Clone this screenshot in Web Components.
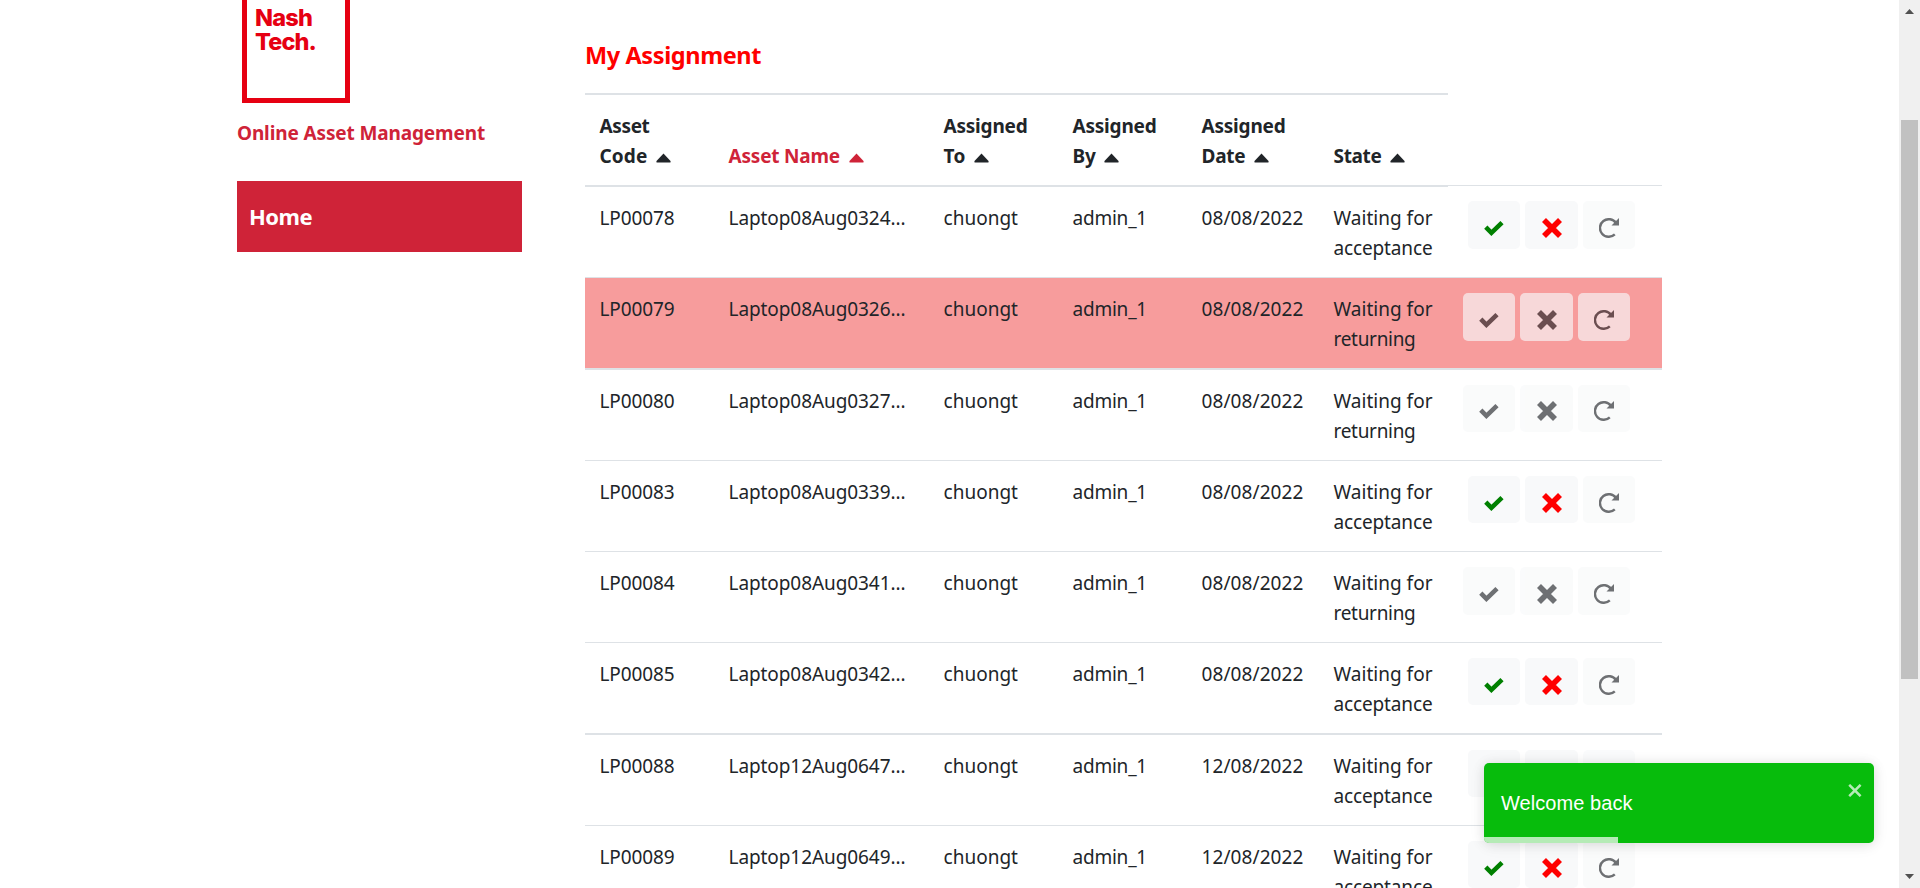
<!DOCTYPE html>
<html lang="en">
<head>
<meta charset="utf-8">
<title>Online Asset Management</title>
<style>
html,body{margin:0;height:888px;overflow:hidden;background:#fff}
body{font:19px/30px "Noto Sans","Open Sans",sans-serif;color:#212529}
</style>
</head>
<body>
<asset-app></asset-app>
<script>
const def=(name,html,after)=>customElements.define(name,class extends HTMLElement{
  connectedCallback(){
    if(this.shadowRoot)return;
    const t=document.createElement('template');
    t.innerHTML=typeof html==='function'?html(this):html;
    this.attachShadow({mode:'open'}).append(t.content.cloneNode(true));
    if(after)after(this);
  }
});

/* Text run that spaces its letters so it occupies the given width. */
def('fit-text','<style>:host{display:inline-block;white-space:nowrap}span{display:inline-block}</style><span><slot></slot></span>',el=>{
  const s=el.shadowRoot.querySelector('span'),w=+el.getAttribute('w');
  s.style.letterSpacing=(w-s.getBoundingClientRect().width)/el.textContent.length+'px';
});

def('brand-logo',`<style>
:host{display:block;box-sizing:border-box;width:108px;height:108px;margin-top:-5px;margin-left:5px;border:5px solid #e60012;padding:6px 0 0 8px;color:#e60012;font:800 23.5px/24px Inter,sans-serif}
div{height:24px}
</style><div><fit-text w="57">Nash</fit-text></div><div><fit-text w="61">Tech.</fit-text></div>`);

def('side-bar',`<style>
:host{display:block;width:285px;margin-left:237px}
h2{margin:15px 0 33px;font-size:19px;line-height:30px;color:#cf2338}
nav{box-sizing:border-box;height:71px;display:flex;align-items:center;padding:0 0 2px 12px;background:#cf2338;color:#fff;font-weight:700;font-size:22px}
</style><brand-logo></brand-logo><h2><fit-text w="248">Online Asset Management</fit-text></h2><nav><fit-text w="63">Home</fit-text></nav>`);

const icons={
 check:'<svg width="20" height="16" viewBox="0 0 20 16"><path d="M1.8 7.2 7.4 12.8 18 2.6" fill="none" stroke="currentColor" stroke-width="4.6"/></svg>',
 cross:'<svg width="20" height="20" viewBox="0 0 20 20"><path d="M2 2 18 18M18 2 2 18" fill="none" stroke="currentColor" stroke-width="5.6"/></svg>',
 redo:'<svg width="20" height="20" viewBox="0 0 20 20"><path d="M17 5A8.8 8.8 0 1 0 15.8 16.4" fill="none" stroke="currentColor" stroke-width="2.4"/><path d="M20 0V7.5H12.5Z" fill="currentColor"/></svg>'
};
def('icon-button',el=>`<style>
:host{box-sizing:border-box;display:flex;align-items:center;justify-content:center;width:52px;height:var(--h,48px);padding-top:var(--pad,6px);border-radius:5px;background:#f8f9fa;color:#212529}
:host([icon=cross]){width:53px}
:host([icon=check]){color:green}:host([icon=cross]){color:red}
:host([disabled]){opacity:.65;color:#212529}
svg{display:block}
</style>${icons[el.getAttribute('icon')]}`);

def('header-cell',el=>`<style>
:host{display:flex;flex-direction:column;justify-content:flex-end;padding:0 0 16px 14.5px;font-weight:700}
:host([active]){color:#cf2338}
svg{margin-left:8.5px}
</style><slot name="top"></slot><div><slot></slot><svg width="15" height="10" viewBox="0 0 15 10"><path d="M7.5.4 14.5 8Q15 9.5 14 9.5H1Q0 9.5.5 8Z" fill="currentColor"/></svg></div>`);

const cols='grid-template-columns:129px 215px 129px 129px 132px 129px 214px;';
def('asset-row',el=>{
  const [code,name,date,state]=['code','name','date','state'].map(k=>el.getAttribute(k));
  const ret=state==='returning',d=ret?'disabled':'';
  return `<style>
:host{box-sizing:border-box;display:grid;${cols}border-bottom:1px solid #dee2e6;height:91px}
:host([thick]){border-bottom-width:2px}
:host([active]){background:#f79c9c}
div{padding:16px 0 0 14.5px}
.acts{display:flex;gap:5px;padding:var(--top,15px) 0 0 ${ret?15:20}px}
</style><div><fit-text w="75">${code}</fit-text></div><div><fit-text w="177">${name}...</fit-text></div><div><fit-text w="74.5">chuongt</fit-text></div><div><fit-text w="74.5">admin_1</fit-text></div><div><fit-text w="102">${date}/08/2022</fit-text></div><div><fit-text w="99">Waiting for</fit-text><br><fit-text w="${ret?82:99}">${state}</fit-text></div>
<div class="acts"><icon-button icon="check" ${d}></icon-button><icon-button icon="cross" ${d}></icon-button><icon-button icon="redo" disabled></icon-button></div>`;
});

const short='--h:47px;--pad:7px';
const rows=[['LP00078','Laptop08Aug0324','08',0,91,'','--top:14px'],['LP00079','Laptop08Aug0326','08',1,92,'active thick',''],['LP00080','Laptop08Aug0327','08',1,91,'','--h:47px;--pad:5px'],['LP00083','Laptop08Aug0339','08',0,91,'',short],['LP00084','Laptop08Aug0341','08',1,91,'',''],['LP00085','Laptop08Aug0342','08',0,92,'thick',short],['LP00088','Laptop12Aug0647','12',0,91,'',short],['LP00089','Laptop12Aug0649','12',0,91,'',short]];
def('asset-table',`<style>
:host{display:block;width:1077px}
.head{display:grid;${cols}height:94px;background:linear-gradient(#dee2e6,#dee2e6) 0 0/863px 2px no-repeat,linear-gradient(#dee2e6,#dee2e6) 0 100%/863px 2px no-repeat,linear-gradient(#dee2e6,#dee2e6) 0 92px/100% 1px no-repeat}
</style><div class="head">
<header-cell><fit-text slot="top" w="50">Asset</fit-text><fit-text w="48">Code</fit-text></header-cell>
<header-cell active><fit-text w="111.5">Asset Name</fit-text></header-cell>
<header-cell><fit-text slot="top" w="84">Assigned</fit-text><fit-text w="22">To</fit-text></header-cell>
<header-cell><fit-text slot="top" w="84">Assigned</fit-text><fit-text w="23">By</fit-text></header-cell>
<header-cell><fit-text slot="top" w="84">Assigned</fit-text><fit-text w="44">Date</fit-text></header-cell>
<header-cell><fit-text w="48">State</fit-text></header-cell></div>
${rows.map(r=>`<asset-row code="${r[0]}" name="${r[1]}" date="${r[2]}" state="${r[3]?'returning':'acceptance'}" ${r[5]} style="height:${r[4]}px;${r[6]}"></asset-row>`).join('')}`);

def('toast-message',`<style>
:host{position:absolute;left:1484px;top:763px;box-sizing:border-box;width:390px;height:80px;border-radius:5px;background:#07bc0c;color:#fff;padding:25px 17px;font:20px/30px "Liberation Sans",Arial,sans-serif;box-shadow:0 1px 12px rgba(0,0,0,.1),0 2px 18px rgba(0,0,0,.06);overflow:hidden}
.x{position:absolute;left:364px;top:21px;opacity:.7}
.bar{position:absolute;left:0;bottom:0;width:134px;height:6px;background:rgba(255,255,255,.7)}
</style><fit-text w="131.5">Welcome back</fit-text><svg class="x" width="14" height="13" viewBox="0 0 14 13"><path d="M1.2.8 12.6 12.2M12.6.8 1.2 12.2" stroke="#fff" stroke-width="2.5"/></svg><div class="bar"></div>`);

def('scroll-bar',`<style>
:host{display:flex;flex-direction:column;align-items:center;box-sizing:border-box;width:21px;height:888px;margin-left:auto;padding:9px 0;background:#f0f0f0}
.thumb{width:17px;height:559px;margin-top:106px;margin-bottom:auto;background:#c1c1c1}
svg{display:block;margin-right:1px}
</style><svg width="9" height="5"><path d="M4.5 0 9 5H0Z" fill="#505050"/></svg><div class="thumb"></div><svg width="9" height="5"><path d="M0 0H9L4.5 5Z" fill="#505050"/></svg>`);

def('asset-app',`<style>
:host{display:flex;width:1920px;height:888px;overflow:hidden;background:#fff}
main{margin-left:63px;padding-top:36px}
h1{margin:0 0 19px;font-size:23.5px;line-height:38px;color:red}
</style><side-bar></side-bar><main><h1><fit-text w="176">My Assignment</fit-text></h1><asset-table></asset-table></main><scroll-bar></scroll-bar><toast-message></toast-message>`);
</script>
</body>
</html>
